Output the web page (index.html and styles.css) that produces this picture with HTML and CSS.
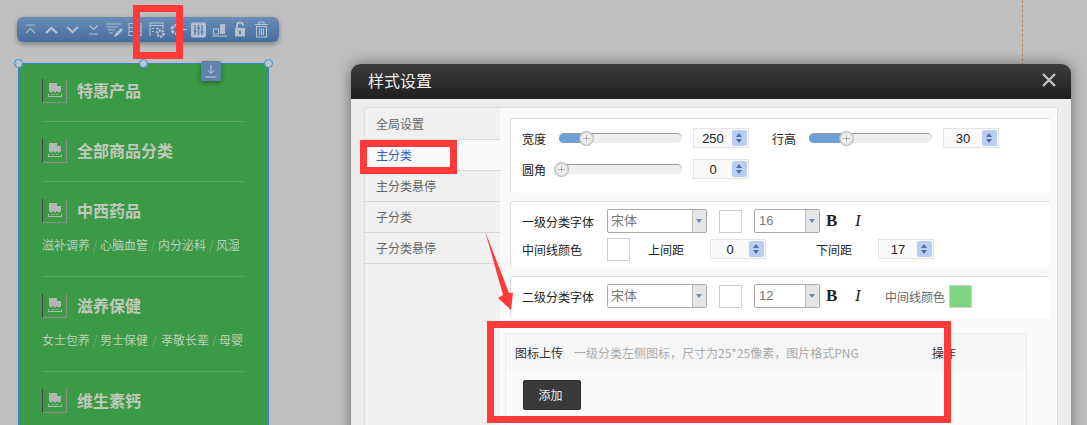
FILE: index.html
```html
<!DOCTYPE html>
<html lang="zh-CN">
<head>
    <meta charset="UTF-8">
    <title>样式设置</title>
    <link rel="stylesheet" href="styles.css">
</head>
<body>
    <svg class="defs" width="0" height="0">
        <symbol id="pic" viewBox="0 0 14 15">
            <path d="M1 0h8v3h4v5l-2 2-2-2-2 2-2-2-2 2-2-2V8H1z" fill="currentColor"/>
            <path d="M0 11h1v2h12v-2h1v3H0z" fill="currentColor"/>
            <path d="M3 12l2-1 2 1 2-1 2 1z" fill="currentColor"/>
        </symbol>
    </svg>

    <div class="stage">
        <div class="guide"></div>

        <!-- toolbar -->
        <div class="toolbar">
            <svg class="tool" viewBox="0 0 21 21"><path d="M6 6h9M6 14l4.500-4.500L15 14" /></svg>
            <svg class="tool" viewBox="0 0 21 21"><path class="thick" d="M5 14l5.500-5 5.500 5" /></svg>
            <svg class="tool" viewBox="0 0 21 21"><path class="thick" d="M5 8l5.500 5 5.500-5" /></svg>
            <svg class="tool" viewBox="0 0 21 21"><path d="M6.500 6.500l4 4 4-4M6 15h9" /></svg>
            <svg class="tool" viewBox="0 0 21 21"><path d="M2 5h15M3 8h11M4 11h7M5 14h4" /><path class="fill" d="M17 9l2 2-6 6-3 1 1-3z" /></svg>
            <svg class="tool" viewBox="0 0 21 21"><path d="M4 4.500h12v12H4zM4 8.500h12M4 12.500h12M8.500 4.500v12M11.500 4.500v12" /></svg>
            <svg class="tool" viewBox="0 0 21 21"><path d="M4 17V4h13v6M4 6.500h13M6 9.500h2M6 12.500h2M10 9.500h3M10 12.500h1" /><circle class="dash" cx="14.500" cy="14.500" r="3" /></svg>
            <svg class="tool" viewBox="0 0 21 21"><circle class="gear" cx="9" cy="10.500" r="4" /><path d="M14 10.500h6" /></svg>
            <svg class="tool" viewBox="0 0 21 21"><rect class="fill" x="3" y="3.500" width="15" height="15" rx="2" /><path class="cut" d="M7 6v10M10.500 6v10M14 6v10M5.500 12h3M9 9h3M12.500 13h3" /></svg>
            <svg class="tool" viewBox="0 0 21 21"><path d="M3 17h15" /><path d="M4.500 10h5v5h-5z" /><rect class="fill" x="11" y="5" width="5" height="10" /></svg>
            <svg class="tool" viewBox="0 0 21 21"><path class="medium" d="M7 9V6.500a3 3 0 0 1 6 0" /><rect class="fill" x="5" y="9" width="10" height="8.500" /><rect class="hole" x="9" y="12" width="2" height="3" /></svg>
            <svg class="tool" viewBox="0 0 21 21"><path d="M5.500 7.500h10v10.500h-10zM4 5.500h13M8 5V3h5v2M8.500 9.500v7M10.500 9.500v7M12.500 9.500v7" /></svg>
        </div>

        <!-- category widget -->
        <div class="widget">
            <span class="handle handle-left"></span>
            <span class="handle handle-mid"></span>
            <span class="handle handle-right"></span>
            <button class="widget-btn">
                <svg viewBox="0 0 20 20"><path d="M10 4v8M6.500 9l3.500 3.500L13.500 9M4.500 16h11" /></svg>
            </button>

            <div class="cat first">
                <div class="cat-title"><span class="cat-icon"><svg><use href="#pic"/></svg></span><span class="cat-name">特惠产品</span></div>
            </div>
            <div class="cat">
                <div class="cat-title"><span class="cat-icon"><svg><use href="#pic"/></svg></span><span class="cat-name">全部商品分类</span></div>
            </div>
            <div class="cat">
                <div class="cat-title"><span class="cat-icon"><svg><use href="#pic"/></svg></span><span class="cat-name">中西药品</span></div>
                <div class="cat-sub">滋补调养<i>/</i>心脑血管<i>/</i>内分泌科<i>/</i>风湿</div>
            </div>
            <div class="cat">
                <div class="cat-title"><span class="cat-icon"><svg><use href="#pic"/></svg></span><span class="cat-name">滋养保健</span></div>
                <div class="cat-sub">女士包养<i>/</i>男士保健<i class="wide">/</i>孝敬长辈<i>/</i>母婴</div>
            </div>
            <div class="cat">
                <div class="cat-title"><span class="cat-icon"><svg><use href="#pic"/></svg></span><span class="cat-name">维生素钙</span></div>
            </div>
        </div>

        <!-- dialog -->
        <div class="dialog">
            <div class="dialog-title">
                <span>样式设置</span>
                <svg class="close" viewBox="0 0 14 14"><path d="M1 1l12 12M13 1L1 13" /></svg>
            </div>
            <div class="dialog-body">
                <div class="nav">
                    <div class="nav-item">全局设置</div>
                    <div class="nav-item active">主分类</div>
                    <div class="nav-item">主分类悬停</div>
                    <div class="nav-item">子分类</div>
                    <div class="nav-item">子分类悬停</div>
                </div>
                <div class="content">
                    <div class="panel panel-size">
                        <div class="row">
                            <span class="label label-short">宽度</span>
                            <div class="slider"><div class="slider-fill fill-27"></div><span class="thumb"></span></div>
                            <div class="number">250<span class="spin"></span></div>
                            <span class="label label-short label-next">行高</span>
                            <div class="slider"><div class="slider-fill fill-30"></div><span class="thumb"></span></div>
                            <div class="number">30<span class="spin"></span></div>
                        </div>
                        <div class="row">
                            <span class="label label-short">圆角</span>
                            <div class="slider"><span class="thumb"></span></div>
                            <div class="number">0<span class="spin"></span></div>
                        </div>
                    </div>

                    <div class="panel panel-font">
                        <div class="row row-font">
                            <span class="label label-long">一级分类字体</span>
                            <div class="select select-font">宋体<span class="caret"></span></div>
                            <span class="swatch"></span>
                            <div class="select select-size">16<span class="caret"></span></div>
                            <b class="bold">B</b>
                            <i class="italic">I</i>
                        </div>
                        <div class="row row-line">
                            <span class="label label-long">中间线颜色</span>
                            <span class="swatch swatch-line"></span>
                            <span class="label label-top">上间距</span>
                            <div class="number">0<span class="spin"></span></div>
                            <span class="label label-bottom">下间距</span>
                            <div class="number">17<span class="spin"></span></div>
                        </div>
                    </div>

                    <div class="panel panel-sub">
                        <div class="row row-font">
                            <span class="label label-long">二级分类字体</span>
                            <div class="select select-font">宋体<span class="caret"></span></div>
                            <span class="swatch"></span>
                            <div class="select select-size">12<span class="caret"></span></div>
                            <b class="bold">B</b>
                            <i class="italic">I</i>
                            <span class="label label-grey">中间线颜色</span>
                            <span class="swatch swatch-green"></span>
                        </div>
                    </div>

                    <div class="upload">
                        <div class="upload-head">
                            <span class="upload-name">图标上传</span>
                            <span class="upload-hint">一级分类左侧图标，尺寸为25*25像素，图片格式PNG</span>
                            <span class="upload-op">操作</span>
                        </div>
                        <div class="upload-foot"><button class="add-button">添加</button></div>
                    </div>
                </div>
            </div>
        </div>

        <!-- red annotations -->
        <div class="mark mark-tool"></div>
        <div class="mark mark-nav"></div>
        <div class="mark mark-upload"></div>
        <svg class="arrow" viewBox="0 0 40 100"><polygon points="1,2 25,64 29,64 27,81 14,69 19,66" /></svg>
    </div>
</body>
</html>
```

FILE: styles.css
```css
* {
    box-sizing: border-box;
}
html, body {
    margin: 0;
    height: 100%;
    overflow: hidden;
}
body {
    font-family: "Noto Sans CJK SC", "Liberation Sans", sans-serif;
    font-size: 12px;
    color: #333;
    background-color: #bfbfbf;
}
.defs {
    position: absolute;
}
.stage {
    position: relative;
    width: 1087px;
    height: 425px;
    overflow: hidden;
}
.guide {
    position: absolute;
    left: 1022px;
    top: 0;
    height: 66px;
    border-left: 1px dashed #c08a5a;
}

/* toolbar */
.toolbar {
    position: absolute;
    left: 17px;
    top: 17px;
    width: 262px;
    height: 25px;
    padding: 2px 3px;
    display: flex;
    border-radius: 6px;
    background: linear-gradient(#6a8db7, #486c9e);
    box-shadow: 0 2px 5px rgba(0, 0, 0, 0.35);
}
.tool {
    width: 21px;
    height: 21px;
    flex: none;
    fill: none;
    stroke: #b4c0cf;
    stroke-width: 1.1;
}
.tool .thick {
    stroke-width: 2.2;
}
.tool .medium {
    stroke-width: 1.8;
}
.tool .fill {
    fill: #b4c0cf;
    stroke: none;
}
.tool .hole {
    fill: #5a7dab;
    stroke: none;
}
.tool .dash {
    stroke-width: 2.6;
    stroke-dasharray: 2 1;
}
.tool .gear {
    stroke-width: 3;
    stroke-dasharray: 3 1.200;
}
.tool .cut {
    stroke: #5a7dab;
    stroke-width: 1.4;
}

/* widget */
.widget {
    position: absolute;
    left: 18px;
    top: 63px;
    width: 251px;
    height: 380px;
    padding: 1px 24px 0 23px;
    background-color: #3a9a46;
    border: 1px solid #2f86c9;
}
.handle {
    position: absolute;
    top: -5px;
    width: 9px;
    height: 9px;
    border-radius: 50%;
    background-color: #b9c6cf;
    border: 1.5px solid #3f8fcf;
}
.handle-left {
    left: -5px;
}
.handle-mid {
    left: 120px;
}
.handle-right {
    right: -5px;
}
.widget-btn {
    position: absolute;
    left: 182px;
    top: -3px;
    width: 20px;
    height: 20px;
    padding: 0;
    border: none;
    border-radius: 2px;
    background-color: #5f84ac;
    box-shadow: 0 2px 5px rgba(0, 0, 0, 0.35);
}
.widget-btn svg {
    display: block;
    fill: none;
    stroke: #c3ccd6;
    stroke-width: 1;
}
.cat {
    padding: 17px 0 18px;
    border-bottom: 1px solid #5aa765;
}
.cat.first {
    padding-top: 14px;
}
.cat-title {
    display: flex;
    align-items: center;
    height: 24px;
    font-size: 16px;
    font-weight: bold;
    color: #c1c9bd;
}
.cat-name {
    margin-bottom: 2px;
}
.cat-icon {
    width: 25px;
    height: 24px;
    margin-right: 10px;
    padding: 4px 0 0 5px;
    flex: none;
    color: #b4b6b4;
    border-left: 1px solid #444;
    border-right: 1px solid #8a8f8a;
    border-bottom: 1px solid #8a8f8a;
}
.cat-icon svg {
    display: block;
    width: 14px;
    height: 15px;
}
.cat-sub {
    margin: 11px -4px 2px 0;
    height: 22px;
    line-height: 22px;
    white-space: nowrap;
    color: #bccfb8;
}
.cat-sub i {
    display: inline-block;
    width: 10px;
    text-align: center;
    font-style: normal;
    color: #6fb078;
}
.cat-sub i.wide {
    width: 13px;
}

/* dialog */
.dialog {
    position: absolute;
    left: 351px;
    top: 64px;
    width: 720px;
    height: 400px;
    border-radius: 9px 9px 0 0;
    background-color: #ececec;
    box-shadow: 0 0 14px rgba(0, 0, 0, 0.45);
}
.dialog-title {
    height: 35px;
    padding: 0 15px 3px 17px;
    display: flex;
    align-items: center;
    justify-content: space-between;
    font-size: 16px;
    color: #eee;
    border-radius: 9px 9px 0 0;
    background: linear-gradient(#3c3c3c, #1f1f1f);
}
.close {
    width: 14px;
    height: 14px;
    fill: none;
    stroke: #c8c8c8;
    stroke-width: 2.2;
}
.dialog-body {
    margin: 8px 13px 0;
    height: 340px;
    display: flex;
    background-color: #fafafa;
    border: 1px solid #dcdcdc;
}
.nav {
    width: 135px;
    padding-top: 1px;
    flex: none;
    background-color: #f0f0f0;
}
.nav-item {
    height: 31px;
    padding-left: 11px;
    line-height: 29px;
    color: #666;
    border-bottom: 1px solid #d6d6d6;
}
.nav-item.active {
    margin-right: -1px;
    background-color: #fafafa;
    color: #2f5fc0;
}
.content {
    flex: 1;
    min-width: 0;
    padding: 10px 7px 0 10px;
}
.panel {
    margin-bottom: 8px;
    padding: 9px 0 0 11px;
    background-color: #fff;
    border-top: 1px solid #dcdcdc;
    border-left: 1px solid #dcdcdc;
    border-radius: 4px;
}
.panel-size {
    height: 75px;
}
.panel-font {
    height: 67px;
    padding-top: 7px;
}
.panel-sub {
    height: 42px;
    padding-top: 7px;
    margin-bottom: 15px;
}
.row {
    display: flex;
    align-items: center;
    height: 20px;
    margin-bottom: 11px;
    color: #222;
}
.row-font {
    height: 24px;
    margin-bottom: 4px;
}
.row-line {
    height: 24px;
}
.label {
    flex: none;
    white-space: nowrap;
}
.label-short {
    width: 37px;
}
.label-next {
    margin-left: 23px;
}
.label-long {
    width: 85px;
}
.label-top {
    margin-left: 18px;
    width: 62px;
}
.label-bottom {
    margin-left: 50px;
    width: 62px;
}
.label-grey {
    margin-left: 22px;
    width: 64px;
    color: #666;
}

/* slider */
.slider {
    position: relative;
    width: 123px;
    height: 10px;
    margin-right: 11px;
    flex: none;
    border-radius: 5px;
    background-color: #eee;
    border-top: 1px solid #999;
}
.slider-fill {
    height: 9px;
    border-radius: 5px 0 0 5px;
    background-color: #6f9fd8;
}
.fill-27 {
    width: 27px;
}
.fill-30 {
    width: 37px;
}
.thumb {
    position: absolute;
    left: -5px;
    top: -3px;
    width: 15px;
    height: 15px;
    border-radius: 50%;
    border: 1px solid #b4b4b4;
    background:
        linear-gradient(#aaa, #aaa) center / 1px 7px no-repeat,
        linear-gradient(#aaa, #aaa) center / 7px 1px no-repeat,
        radial-gradient(circle, #f6f6f6 35%, #c4c4c4 100%);
}
.fill-27 + .thumb {
    left: 20px;
}
.fill-30 + .thumb {
    left: 30px;
}

/* number box and selects */
.number {
    position: relative;
    width: 56px;
    height: 20px;
    padding-right: 16px;
    flex: none;
    text-align: center;
    line-height: 20px;
    font-family: "Liberation Sans", sans-serif;
    font-size: 13px;
    color: #222;
    background-color: #fafafa;
    border: 1px solid #e4e4e4;
}
.spin {
    position: absolute;
    right: 1px;
    top: 1px;
    width: 15px;
    height: 16px;
    border-radius: 2px;
    background-color: #b9cdf5;
}
.spin::before, .spin::after {
    content: "";
    position: absolute;
    left: 4px;
    border-left: 3.500px solid transparent;
    border-right: 3.500px solid transparent;
}
.spin::before {
    top: 3px;
    border-bottom: 4px solid #4f6f9f;
}
.spin::after {
    bottom: 3px;
    border-top: 4px solid #4f6f9f;
}
.select {
    position: relative;
    flex: none;
    height: 24px;
    padding-left: 3px;
    line-height: 20px;
    font-size: 13px;
    color: #777;
    background-color: #fff;
    border: 1px solid #a9a9a9;
    border-radius: 2px;
}
.select-font {
    width: 100px;
    margin-left: 0;
}
.select-size {
    width: 66px;
    padding-left: 4px;
    line-height: 22px;
    font-family: "Liberation Sans", sans-serif;
}
.caret {
    position: absolute;
    right: 0;
    top: 0;
    bottom: 0;
    width: 14px;
    background-color: #e6e6e6;
    border-left: 1px solid #bbb;
}
.caret::after {
    content: "";
    position: absolute;
    left: 3px;
    top: 9px;
    border-left: 3.500px solid transparent;
    border-right: 3.500px solid transparent;
    border-top: 4px solid #5b93c5;
}
.swatch {
    flex: none;
    width: 23px;
    height: 23px;
    margin: 0 12px;
    background-color: #fff;
    border: 1px solid #cfcfcf;
}
.swatch-line {
    margin: 0;
}
.swatch-green {
    margin: 0;
    background-color: #7fd682;
}
.bold, .italic {
    font-family: "Liberation Serif", serif;
    font-size: 17px;
    color: #222;
}
.bold {
    margin-left: 6px;
    width: 29px;
}
.italic {
    width: 8px;
}

/* icon upload */
.upload {
    width: 522px;
    height: 120px;
    margin-left: -5px;
    background-color: #fafafa;
    border: 1px solid #ececec;
}
.upload-head {
    display: flex;
    align-items: center;
    height: 37px;
    padding-left: 9px;
    background-color: #f6f6f6;
    border-bottom: 1px solid #f8f8f8;
}
.upload-name {
    width: 59px;
    color: #333;
}
.upload-hint {
    width: 358px;
    color: #aaa;
}
.upload-op {
    color: #333;
}
.upload-foot {
    padding: 9px 0 0 17px;
}
.add-button {
    width: 58px;
    height: 30px;
    padding: 0 3px 1px 0;
    font-family: inherit;
    font-size: 12px;
    color: #eee;
    background-color: #3a3a3a;
    border: 1px solid #2c2c2c;
    border-radius: 2px;
}

/* red annotations */
.mark {
    position: absolute;
    border: 7px solid #fe3a3a;
}
.mark-tool {
    left: 133px;
    top: 5px;
    width: 50px;
    height: 54px;
}
.mark-nav {
    left: 360px;
    top: 140px;
    width: 97px;
    height: 34px;
}
.mark-upload {
    left: 487px;
    top: 321px;
    width: 464px;
    height: 102px;
}
.arrow {
    position: absolute;
    left: 484px;
    top: 229px;
    width: 40px;
    height: 100px;
    fill: #fe3a3a;
}
```
